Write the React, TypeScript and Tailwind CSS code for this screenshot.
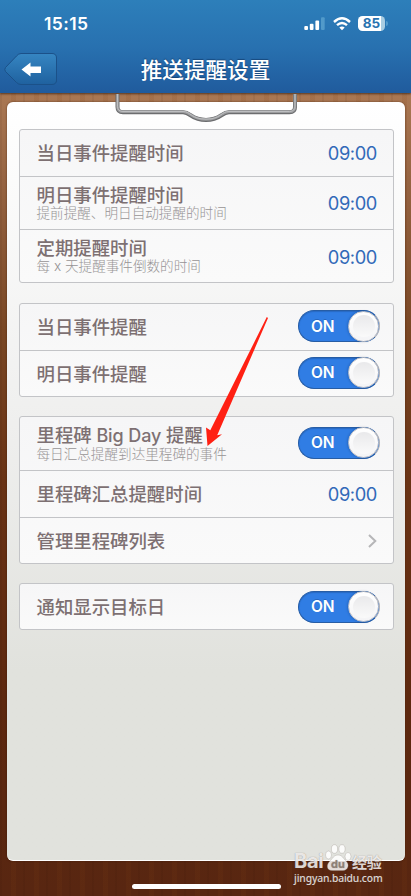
import type { ReactNode } from "react";

type RowProps = {
  title: ReactNode;
  hint?: string;
  className: string;
  children: ReactNode;
};

function Row({ title, hint, className, children }: RowProps) {
  return (
    <div className={`flex items-center justify-between pl-[16.5px] ${className}`}>
      <div>
        <div className="text-[18.4px] leading-5 font-medium whitespace-nowrap text-[#7d7072]">{title}</div>
        {hint && (
          <div className="text-[13.6px] leading-[17px] font-light whitespace-nowrap text-[#979495]">{hint}</div>
        )}
      </div>
      {children}
    </div>
  );
}

function Group({ className, children }: { className: string; children: ReactNode }) {
  return (
    <section
      className={`divide-y divide-[#c3c4c7] rounded-[3px] border border-[#c3c4c7] bg-gradient-to-b from-[#f6f6f7] to-[#fafafa] ${className}`}
    >
      {children}
    </section>
  );
}

function Time() {
  return (
    <span className="pr-4 font-[Inter] text-[18.3px] leading-5 tracking-[-0.4px] text-[#3269b8]">09:00</span>
  );
}

function Toggle({ className = "mb-[2px]" }: { className?: string }) {
  return (
    <button
      type="button"
      className={`mr-[13px] flex h-8 w-[82px] items-center justify-between rounded-full border border-[#275da5] border-r-[#b5b5b9] bg-[#307de4] pl-3 shadow-[inset_0_1px_1px_rgba(20,60,120,0.3)] ${className}`}
    >
      <span className="pt-px font-[Inter] text-[15.5px] font-semibold tracking-[-0.2px] text-white [text-shadow:0_-1px_0_rgba(20,60,120,0.35)]">ON</span>
      <span className="flex size-[31px] shrink-0 items-center justify-center rounded-full border border-[#c3c3c7] bg-gradient-to-b from-white to-[#f4f4f6] shadow-[-1px_0_2px_rgba(20,50,100,0.25)]">
        <span className="size-[22px] rounded-full bg-gradient-to-b from-[#e9e9eb] to-[#fafafa]" />
      </span>
    </button>
  );
}

function StatusBar() {
  return (
    <div className="flex h-[47px] items-center justify-between pr-[26px] pl-11">
      <span className="pt-px font-[Inter] text-[17.5px] font-semibold tracking-[0.4px]">15:15</span>
      <div className="flex items-center">
        <svg width="22" height="14" viewBox="0 0 22 14" fill="#fff">
          <rect x="0.3" y="9" width="3.7" height="4" rx="1" />
          <rect x="5.8" y="6.7" width="3.7" height="6.3" rx="1" />
          <rect x="11.4" y="3.5" width="3.7" height="9.5" rx="1" />
          <rect x="17" y="0.3" width="3.7" height="12.7" rx="1" fill="#519aca" />
        </svg>
        <svg className="ml-[7px]" width="18" height="14" viewBox="0 0 18 14" fill="none" stroke="#fff" strokeWidth="2.4">
          <path d="M1 5 Q9-2.4 17 5" />
          <path d="M4 8.2 Q9 3.8 14 8.2" />
          <path d="M6.3 10.5 Q9 8.4 11.7 10.5 L9 13.3 Z" fill="#fff" stroke="none" />
        </svg>
        <div className="-mr-[3px] ml-[7px] flex items-center">
          <span className="flex h-[15px] w-[27px] items-center justify-center rounded-[4.5px] bg-[linear-gradient(90deg,#fff_85%,#a9cde2_85%)] font-[Inter] text-[13.5px] font-bold text-[#2973b0]">
            85
          </span>
          <span className="ml-px h-[5px] w-[2px] rounded-r-full bg-[#519aca]" />
        </div>
      </div>
    </div>
  );
}

function BackButton() {
  return (
    <svg className="absolute top-[52px] left-[3px]" width="55" height="34" viewBox="0 0 55 34">
      <defs>
        <linearGradient id="back" x1="0" y1="0" x2="0" y2="1">
          <stop offset="0" stopColor="#3686c2" />
          <stop offset="1" stopColor="#1f619f" />
        </linearGradient>
      </defs>
      <path
        d="M18 1.5H49Q53.5 1.5 53.5 6V28Q53.5 32.5 49 32.5H18Q15.5 32.5 13.5 30.5L2.5 19.5Q1 17.5 2.5 15.5L13.5 4Q15.5 1.5 18 1.5Z"
        fill="url(#back)"
        stroke="#1b5189"
      />
      <path d="M18.5 17.5L27.5 10.5V14.5H38V21H27.5V24.5Z" fill="#fff" />
    </svg>
  );
}

function Clip() {
  const d = "M117.5 92V107Q117.5 112.3 123 112.3H183C191 112.3 191 120 206 120S221 112.3 229 112.3H289.5Q295 112.3 295 107V92";
  return (
    <svg className="absolute top-[94px] left-0" width="411" height="30" viewBox="0 94 411 30" fill="none">
      <path d={d} stroke="#6c6d6f" strokeWidth="4" />
      <path d={d} stroke="#9c9d9f" strokeWidth="2.6" transform="translate(0 -0.5)" />
      <path d={d} stroke="#bdbec0" strokeWidth="1" transform="translate(0 -0.8)" />
    </svg>
  );
}

function Pointer() {
  return (
    <svg className="pointer-events-none absolute top-[310px] left-[200px]" width="72" height="140" viewBox="200 310 72 140">
      <path d="M266.8 317L268 318L217.2 435.2L222 434.3L207.5 446L206 427.5L210.3 430.3Z" fill="#ff2013" />
    </svg>
  );
}

function Watermark() {
  return (
    <div className="absolute top-[840px] left-[294px] w-[90px] text-white/80 [text-shadow:0_0_1px_rgba(80,60,50,0.6)]">
      <div className="flex h-[31px] items-end">
        <span className="w-[30px] font-[Inter] text-[20px] leading-[20px] font-bold tracking-[-0.3px]">Bai</span>
        <svg width="28" height="30" viewBox="0 0 28 30" fill="#fff" fillOpacity="0.85" stroke="#958a84" strokeOpacity="0.5" strokeWidth="0.6">
          <ellipse cx="4.5" cy="14" rx="3" ry="4" />
          <ellipse cx="10.5" cy="8" rx="3.1" ry="4.3" />
          <ellipse cx="18" cy="8" rx="3.1" ry="4.3" />
          <ellipse cx="24" cy="15.5" rx="3" ry="4" />
          <path d="M14 14C18 14 19 17 22 20C26 23.5 24 29.5 19 29.5H8C2.5 29.5 2 23.5 6 20C9 17 10 14 14 14Z" />
          <text x="14" y="27" textAnchor="middle" className="font-[Inter] text-[11px] font-bold" fill="#8a7b72" stroke="none">du</text>
        </svg>
        <span className="text-[15px] leading-[17px] font-bold tracking-[-0.3px] whitespace-nowrap">经验</span>
      </div>
      <div className="mt-px font-['Noto_Sans'] text-[10.3px] leading-[13px] font-medium tracking-[-0.13px]">jingyan.baidu.com</div>
    </div>
  );
}

export default function App() {
  return (
    <div className="relative flex h-[896px] w-[411px] flex-col overflow-hidden bg-[repeating-linear-gradient(90deg,rgba(30,8,0,0.06)_0_2px,transparent_2px_11px,rgba(130,65,20,0.12)_11px_16px,transparent_16px_23px),linear-gradient(180deg,#aa7853_93px,#966442_180px,#794724_330px,#693315_480px,#5d280f_700px,#582611_896px)] font-['Inter','Noto_Sans_CJK_SC',sans-serif]">
      <header className="h-[93px] shrink-0 bg-gradient-to-b from-[#2d7fba] via-[#2871b0] to-[#205b9d] text-white shadow-[0_1px_2px_rgba(50,25,10,0.7)]">
        <StatusBar />
        <h1 className="mt-2 text-center text-[21.6px] leading-[30px] font-medium [text-shadow:0_-1px_1px_rgba(10,40,80,0.5)]">推送提醒设置</h1>
        <BackButton />
      </header>

      <main className="mx-[7px] mt-[9px] h-[759px] w-[398px] shrink-0 rounded-[6px] border-b border-white bg-gradient-to-b from-white via-[#eeeeed] via-45% to-[#e1e2dd] to-75% pt-[27px] shadow-[0_0_2px_rgba(50,20,0,0.65)]">
        <Group className="mr-[11px] ml-3">
          <Row title="当日事件提醒时间" className="h-[47px]">
            <Time />
          </Row>
          <Row title="明日事件提醒时间" hint="提前提醒、明日自动提醒的时间" className="h-[53px]">
            <Time />
          </Row>
          <Row title="定期提醒时间" hint="每 x 天提醒事件倒数的时间" className="h-[52px] pt-px">
            <Time />
          </Row>
        </Group>
        <Group className="mt-5 mr-[11px] ml-3">
          <Row title="当日事件提醒" className="h-[47px]">
            <Toggle />
          </Row>
          <Row title="明日事件提醒" className="h-[45px]">
            <Toggle />
          </Row>
        </Group>
        <Group className="mt-[19px] mr-[11px] ml-3">
          <Row
            title={
              <>
                里程碑<span className="text-[18px] tracking-[-0.1px]"> Big Day </span>提醒
              </>
            }
            hint="每日汇总提醒到达里程碑的事件"
            className="h-[54px]"
          >
            <Toggle />
          </Row>
          <Row title="里程碑汇总提醒时间" className="h-[47px]">
            <Time />
          </Row>
          <Row title="管理里程碑列表" className="h-[45px]">
            <svg className="mr-4" width="9" height="14" viewBox="0 0 9 14" fill="none" stroke="#b6b6b8" strokeWidth="2">
              <path d="M1 1L7.3 7L1 13" />
            </svg>
          </Row>
        </Group>
        <Group className="mt-[19px] mr-[11px] ml-3">
          <Row title="通知显示目标日" className="h-[45px]">
            <Toggle className="" />
          </Row>
        </Group>
      </main>

      <div className="mt-[23px] ml-[132px] h-[5px] w-[149px] rounded-full bg-white" />

      <Clip />
      <Pointer />
      <Watermark />
    </div>
  );
}
